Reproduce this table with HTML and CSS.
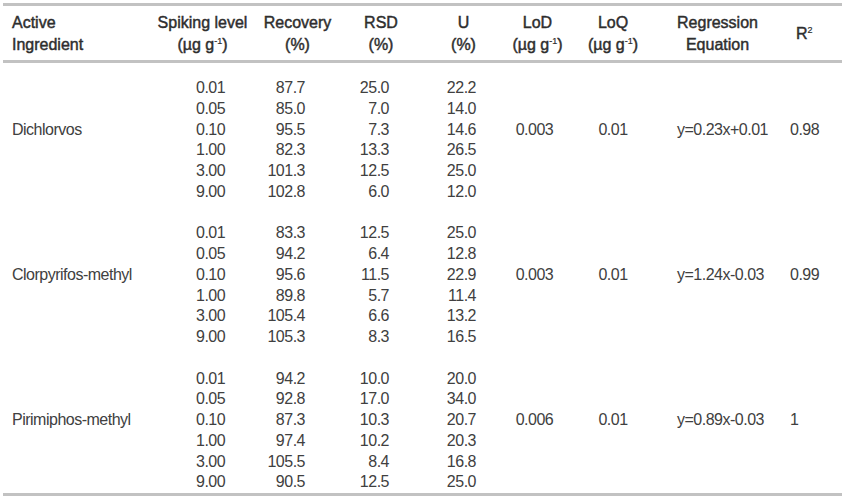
FILE: index.html
```html
<!DOCTYPE html>
<html lang="en">
<head>
<meta charset="utf-8">
<title>Validation parameters</title>
<link rel="stylesheet" href="styles.css">
</head>
<body>
<table class="results">
  <colgroup>
    <col class="w-name"><col class="w-spike"><col class="w-rec"><col class="w-rsd"><col class="w-u"><col class="w-lod"><col class="w-loq"><col class="w-eq"><col class="w-r2">
  </colgroup>
  <thead>
    <tr>
      <th>Active<br>Ingredient</th>
      <th>Spiking level<br>(µg g<sup>-1</sup>)</th>
      <th>Recovery<br>(%)</th>
      <th>RSD<br>(%)</th>
      <th>U<br>(%)</th>
      <th>LoD<br>(µg g<sup>-1</sup>)</th>
      <th>LoQ<br>(µg g<sup>-1</sup>)</th>
      <th>Regression<br>Equation</th>
      <th>R<sup>2</sup></th>
    </tr>
  </thead>
  <tbody>
    <tr class="spacer"><td colspan="9"></td></tr>
    <tr><td></td><td>0.01</td><td>87.7</td><td>25.0</td><td>22.2</td><td></td><td></td><td></td><td></td></tr>
    <tr><td></td><td>0.05</td><td>85.0</td><td>7.0</td><td>14.0</td><td></td><td></td><td></td><td></td></tr>
    <tr><td>Dichlorvos</td><td>0.10</td><td>95.5</td><td>7.3</td><td>14.6</td><td>0.003</td><td>0.01</td><td>y=0.23x+0.01</td><td>0.98</td></tr>
    <tr><td></td><td>1.00</td><td>82.3</td><td>13.3</td><td>26.5</td><td></td><td></td><td></td><td></td></tr>
    <tr><td></td><td>3.00</td><td>101.3</td><td>12.5</td><td>25.0</td><td></td><td></td><td></td><td></td></tr>
    <tr><td></td><td>9.00</td><td>102.8</td><td>6.0</td><td>12.0</td><td></td><td></td><td></td><td></td></tr>
    <tr class="blank"><td colspan="9"></td></tr>
    <tr><td></td><td>0.01</td><td>83.3</td><td>12.5</td><td>25.0</td><td></td><td></td><td></td><td></td></tr>
    <tr><td></td><td>0.05</td><td>94.2</td><td>6.4</td><td>12.8</td><td></td><td></td><td></td><td></td></tr>
    <tr><td>Clorpyrifos-methyl</td><td>0.10</td><td>95.6</td><td>11.5</td><td>22.9</td><td>0.003</td><td>0.01</td><td>y=1.24x-0.03</td><td>0.99</td></tr>
    <tr><td></td><td>1.00</td><td>89.8</td><td>5.7</td><td>11.4</td><td></td><td></td><td></td><td></td></tr>
    <tr><td></td><td>3.00</td><td>105.4</td><td>6.6</td><td>13.2</td><td></td><td></td><td></td><td></td></tr>
    <tr><td></td><td>9.00</td><td>105.3</td><td>8.3</td><td>16.5</td><td></td><td></td><td></td><td></td></tr>
    <tr class="blank"><td colspan="9"></td></tr>
    <tr><td></td><td>0.01</td><td>94.2</td><td>10.0</td><td>20.0</td><td></td><td></td><td></td><td></td></tr>
    <tr><td></td><td>0.05</td><td>92.8</td><td>17.0</td><td>34.0</td><td></td><td></td><td></td><td></td></tr>
    <tr><td>Pirimiphos-methyl</td><td>0.10</td><td>87.3</td><td>10.3</td><td>20.7</td><td>0.006</td><td>0.01</td><td>y=0.89x-0.03</td><td>1</td></tr>
    <tr><td></td><td>1.00</td><td>97.4</td><td>10.2</td><td>20.3</td><td></td><td></td><td></td><td></td></tr>
    <tr><td></td><td>3.00</td><td>105.5</td><td>8.4</td><td>16.8</td><td></td><td></td><td></td><td></td></tr>
    <tr><td></td><td>9.00</td><td>90.5</td><td>12.5</td><td>25.0</td><td></td><td></td><td></td><td></td></tr>
  </tbody>
</table>
</body>
</html>
```
FILE: styles.css
```css
html, body {
  margin: 0;
  padding: 0;
  background: #ffffff;
}

body {
  font-family: "Liberation Sans", Arial, sans-serif;
  font-size: 16px;
  color: #404040;
}

.results {
  margin: 3px 0 0 3px;
  width: 839px;
  table-layout: fixed;
  border-collapse: separate;
  border-spacing: 0;
  border-top: 3px solid #c2c2c2;
  border-bottom: 3px solid #c2c2c2;
}

.w-name { width: 147px; }
.w-spike { width: 105px; }
.w-rec { width: 85px; }
.w-rsd { width: 82px; }
.w-u { width: 83px; }
.w-lod { width: 65px; }
.w-loq { width: 86px; }
.w-eq { width: 123px; }
.w-r2 { width: 63px; }

.results th {
  font-weight: normal;
  -webkit-text-stroke: 0.45px #2e2e2e;
  color: #2e2e2e;
  line-height: 22px;
  padding: 6px 0 4px 0;
  border-bottom: 3px solid #c2c2c2;
  text-align: center;
  vertical-align: middle;
  white-space: nowrap;
}

.results th:first-child {
  text-align: left;
  padding-left: 9px;
}

.results th:last-child {
  text-align: left;
  padding-left: 17px;
}

.results sup {
  font-size: 9px;
  line-height: 0;
  vertical-align: 6px;
  letter-spacing: 0;
  -webkit-text-stroke: 0.2px #2e2e2e;
}

.results td {
  padding: 0;
  line-height: 20.75px;
  height: 20.75px;
  letter-spacing: -0.5px;
  white-space: nowrap;
  vertical-align: top;
}

.results .spacer td { height: 15px; line-height: 15px; }

.results td:nth-child(1) { padding-left: 9px; }
.results td:nth-child(2) { text-align: left; padding-left: 46px; }
.results td:nth-child(3) { text-align: right; padding-right: 35px; }
.results td:nth-child(4) { text-align: right; padding-right: 33px; }
.results td:nth-child(5) { text-align: right; padding-right: 29px; }
.results td:nth-child(6) { text-align: center; padding-right: 6px; }
.results td:nth-child(7) { text-align: center; }
.results td:nth-child(8) { text-align: left; padding-left: 21px; }
.results td:nth-child(9) { text-align: left; padding-left: 11px; }

.results .spacer td,
.results .blank td { padding: 0; }
```
